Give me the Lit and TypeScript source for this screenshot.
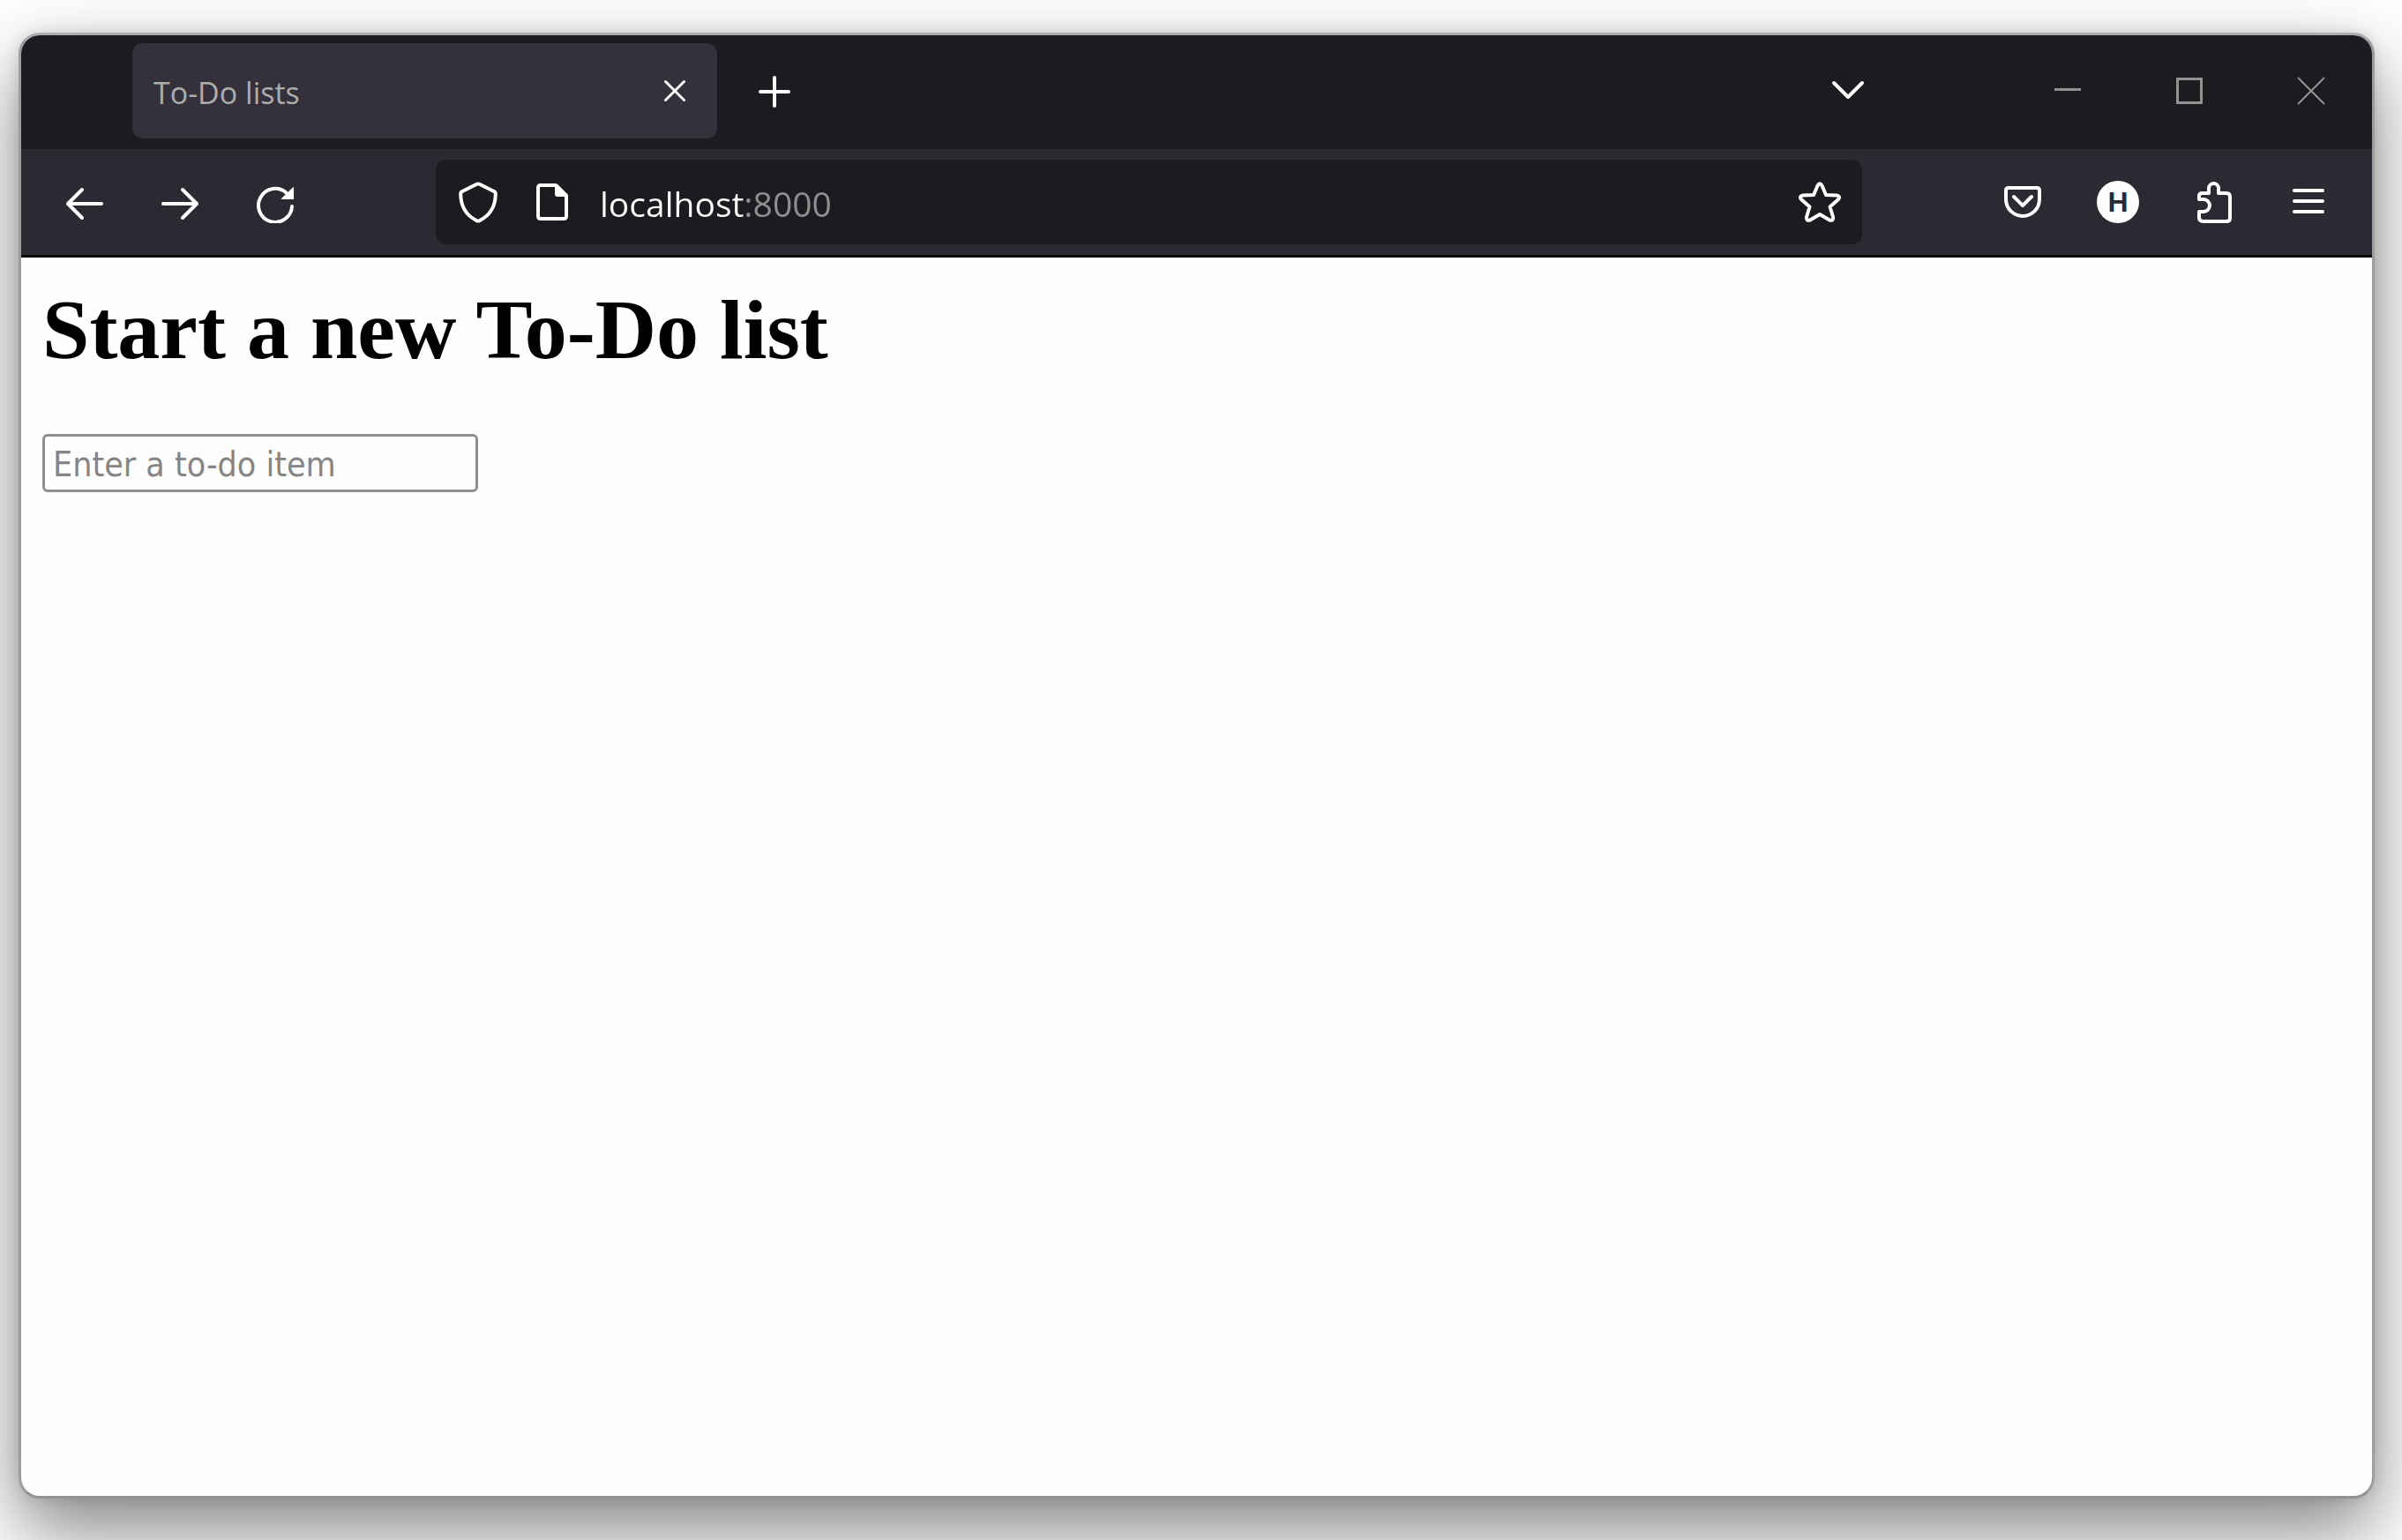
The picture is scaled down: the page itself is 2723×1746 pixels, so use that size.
import { LitElement, html, css, svg } from "lit";
import { customElement } from "lit/decorators.js";

const icon = (body: unknown) =>
  html`<svg class="icon" viewBox="0 0 48 48" aria-hidden="true">${body}</svg>`;

const icons = {
  back: svg`<path d="M43 26H5M21 10 5 26l16 16"/>`,
  forward: svg`<path d="M5 26h38M27 10l16 16-16 16"/>`,
  reload: svg`<path d="M43 29a19 19 0 1 1-6-15"/><path class="solid" d="M44 7.500q1-1 1 1V21H32q-2 0-1-1z"/>`,
  shield: svg`<path d="M22.500 3.800Q24 3 25.500 3.800L42 12Q44 13 43.800 15.500C43.500 29 38 39 25.500 45.200Q24 46 22.500 45.200C10 39 4.500 29 4.200 15.500Q4 13 6 12Z"/>`,
  page: svg`<path d="M11 5h17l12 12v23q0 3-3 3H11q-3 0-3-3V8q0-3 3-3z"/><path class="solid" d="M27 4h3l12 12v2H30q-3 0-3-3z"/>`,
  star: svg`<path d="M21.500 5.500q2.500-4.500 5 0L31 16l12 .5q5 1 1.800 4.800L35.500 29.500 39 41q.5 5-4 3.500L24 38l-11 6.500q-4.500 1.500-4-3.500l3.500-11.500L3.200 21.300Q0 17.500 5 16.500L17 16z"/>`,
  pocket: svg`<path d="M8 8h32q3 0 3 3v10a19 19 0 0 1-38 0V11q0-3 3-3z"/><path d="M14 18l10 10 10-10"/>`,
  puzzle: svg`<path d="M10 14h9V8.500a5.500 5.500 0 0 1 11 0V14h9q4 0 4 4v24q0 4-4 4h-25q-6 0-6-4v-7h5a7 7 0 0 0 0-14H8v-4q0-3 4-3z"/>`,
  menu: svg`<path d="M8 11h32M8 23h32M8 35h32"/>`,
  plus: svg`<path d="M24 9v32M8 25h32"/>`,
  closeTab: svg`<path class="thin" d="M13.500 13.500l21 21M34.500 13.500l-21 21"/>`,
  chevron: svg`<path d="M8 15l16 16 16-16"/>`,
  minimize: svg`<path class="chrome" d="M9 22.500h30"/>`,
  maximize: svg`<path class="chrome" d="M10.500 10.500h27v27h-27z"/>`,
  close: svg`<path class="chrome hair" d="M9 9l30 30M39 9L9 39"/>`,
};

@customElement("app-root")
export class AppRoot extends LitElement {
  static styles = css`
    :host {
      display: flex;
      min-height: 100vh;
      box-sizing: border-box;
      padding: 37px 31px 47px 21px;
      background: #fefefe;
      overflow: hidden;
      font-family: "Open Sans", "Noto Sans", sans-serif;
    }
    .window {
      flex: 1;
      display: flex;
      flex-direction: column;
      min-width: 0;
      border: 3px solid #9d9da0;
      border-top-color: #abacae;
      border-bottom-color: #929294;
      border-radius: 24px;
      background: #fefefe;
      background-clip: padding-box;
      box-shadow: 0 36px 84px rgba(0, 0, 0, 0.48), 0 0 16px rgba(0, 0, 0, 0.12);
      overflow: hidden;
    }
    button {
      display: flex;
      align-items: center;
      justify-content: center;
      flex: none;
      padding: 0;
      border: 0;
      background: none;
      color: inherit;
      font: inherit;
    }
    .icon {
      display: block;
      flex: none;
      width: 48px;
      height: 48px;
      fill: none;
      stroke: #fefefe;
      stroke-width: 4;
      stroke-linecap: round;
      stroke-linejoin: round;
    }
    .solid {
      fill: #fefefe;
      stroke: none;
    }
    .thin {
      stroke-width: 3;
    }
    .chrome {
      stroke: #929292;
      stroke-width: 3;
      stroke-linecap: butt;
      stroke-linejoin: miter;
    }
    .hair {
      stroke-width: 2;
    }
    .tabs {
      display: flex;
      padding: 9px 0 12px 126px;
      background: #1c1b20;
    }
    .tab {
      flex: 0 1 663px;
      display: flex;
      align-items: center;
      justify-content: space-between;
      box-sizing: border-box;
      height: 108px;
      padding: 0 24px;
      border-radius: 12px;
      background: #34313c;
      color: #adadad;
      font-size: 34px;
      line-height: 48px;
    }
    .title {
      padding-top: 4px;
    }
    .slot {
      width: 108px;
      height: 108px;
    }
    .add {
      margin-left: 11px;
    }
    .list {
      margin-left: auto;
      margin-right: 126px;
    }
    .control {
      width: 138px;
      height: 108px;
    }
    .toolbar {
      display: flex;
      align-items: center;
      height: 120px;
      padding: 0 18px;
      border-bottom: 3px solid #08080b;
      background: #2b2a33;
    }
    .address {
      flex: 1;
      display: flex;
      align-items: center;
      box-sizing: border-box;
      min-width: 0;
      height: 96px;
      margin: 0 128px;
      padding: 0 24px;
      border-radius: 12px;
      background: #1c1b20;
    }
    .info {
      width: 48px;
      height: 48px;
    }
    .site {
      margin: 0 30px 0 36px;
    }
    .url {
      flex: 1;
      min-width: 0;
      height: 60px;
      padding: 4px 0 0;
      border: 0;
      outline: 0;
      background: linear-gradient(to right, #fefefe 164px, #8f8f90 164px);
      background-clip: text;
      -webkit-background-clip: text;
      -webkit-text-fill-color: transparent;
      font-family: inherit;
      font-size: 39px;
      line-height: 60px;
    }
    .avatar {
      width: 48px;
      height: 48px;
      border-radius: 24px;
      background: #fefefe;
      color: #2b2a33;
      font-family: "Liberation Sans", sans-serif;
      font-size: 32px;
      font-weight: 700;
      line-height: 48px;
      text-align: center;
    }
    .page {
      flex: 1;
      padding: 24px;
      color: #000;
    }
    h1 {
      margin: 0 0 60px;
      font-family: "Liberation Serif", serif;
      font-size: 96px;
      font-weight: 700;
      line-height: 116px;
    }
    .item {
      display: block;
      box-sizing: border-box;
      width: 494px;
      height: 66px;
      padding: 6px 9px 3px;
      border: 3px solid #8f8f8f;
      border-radius: 6px;
      background: #fefefe;
      font-family: "DejaVu Sans Condensed", "DejaVu Sans", sans-serif;
      font-stretch: condensed;
      font-size: 39px;
    }
    .item::placeholder {
      color: #858585;
      opacity: 1;
    }
  `;

  render() {
    return html`
      <div class="window">
        <header>
          <div class="tabs">
            <div class="tab">
              <span class="title">To-Do lists</span>
              <button aria-label="Close tab">${icon(icons.closeTab)}</button>
            </div>
            <button class="slot add" aria-label="New tab">${icon(icons.plus)}</button>
            <button class="slot list" aria-label="List all tabs">${icon(icons.chevron)}</button>
            <button class="control" aria-label="Minimize">${icon(icons.minimize)}</button>
            <button class="control" aria-label="Maximize">${icon(icons.maximize)}</button>
            <button class="control" aria-label="Close">${icon(icons.close)}</button>
          </div>
          <nav class="toolbar">
            <button class="slot" aria-label="Back">${icon(icons.back)}</button>
            <button class="slot" aria-label="Forward">${icon(icons.forward)}</button>
            <button class="slot" aria-label="Reload">${icon(icons.reload)}</button>
            <div class="address">
              <button class="info" aria-label="Tracking protection">${icon(icons.shield)}</button>
              <button class="info site" aria-label="Site information">${icon(icons.page)}</button>
              <input class="url" type="text" aria-label="Address" value="localhost:8000" />
              <button class="info" aria-label="Bookmark this page">${icon(icons.star)}</button>
            </div>
            <button class="slot" aria-label="Save to Pocket">${icon(icons.pocket)}</button>
            <button class="slot" aria-label="Account"><span class="avatar">H</span></button>
            <button class="slot" aria-label="Extensions">${icon(icons.puzzle)}</button>
            <button class="slot" aria-label="Menu">${icon(icons.menu)}</button>
          </nav>
        </header>
        <main class="page">
          <h1>Start a new To-Do list</h1>
          <input class="item" type="text" aria-label="To-do item" placeholder="Enter a to-do item" />
        </main>
      </div>
    `;
  }
}
